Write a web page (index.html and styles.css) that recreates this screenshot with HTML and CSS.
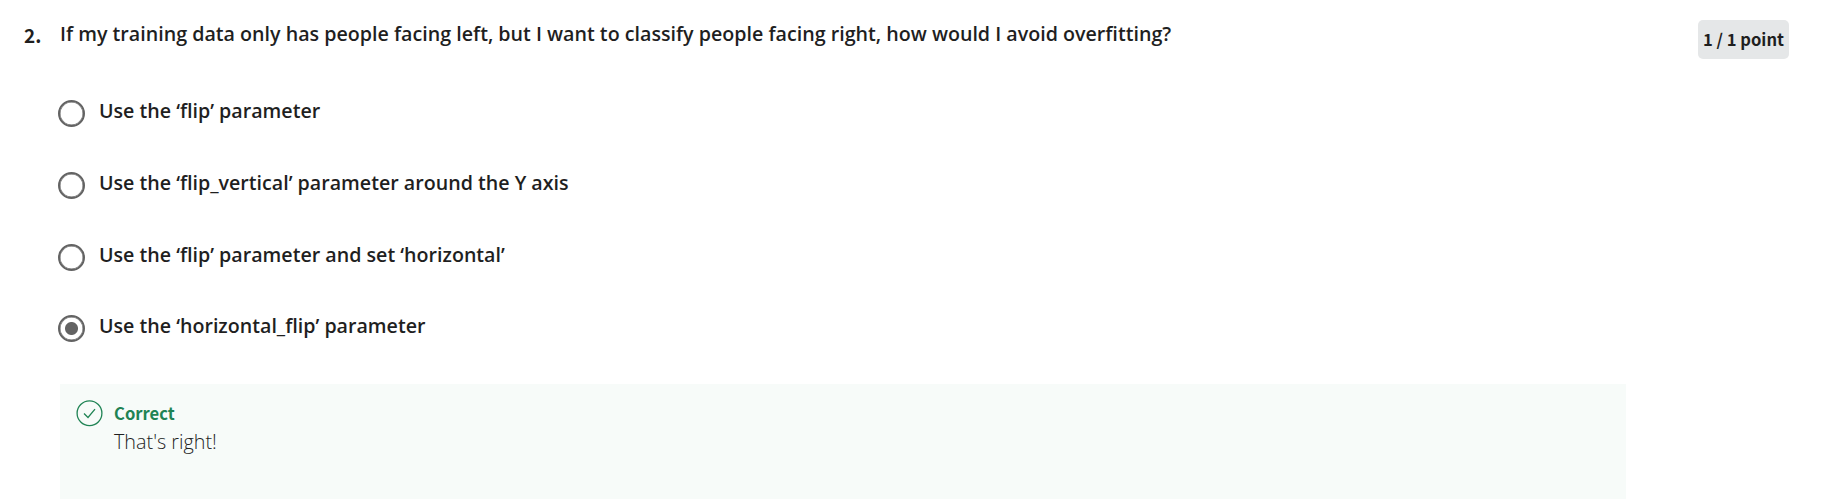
FILE: index.html
```
<!DOCTYPE html>
<html lang="en">
<head>
<meta charset="utf-8">
<title>Quiz question</title>
<link rel="stylesheet" href="styles.css">
</head>
<body>
<main class="question">
  <div class="number">2.</div>
  <section class="content">
    <h2 class="prompt">If my training data only has people facing left, but I want to classify people facing right, how would I avoid overfitting?</h2>
    <div class="options">
      <div class="option"><span class="radio"></span><span class="label">Use the ‘flip’ parameter</span></div>
      <div class="option"><span class="radio"></span><span class="label">Use the ‘flip_vertical’ parameter around the Y axis</span></div>
      <div class="option"><span class="radio"></span><span class="label">Use the ‘flip’ parameter and set ‘horizontal’</span></div>
      <div class="option"><span class="radio checked"></span><span class="label">Use the ‘horizontal_flip’ parameter</span></div>
    </div>
    <div class="feedback">
      <svg class="check" viewBox="0 0 28 28" width="28" height="28" fill="none" stroke="#1f8354" stroke-width="1.3"><circle cx="13.5" cy="14.3" r="12.4"/><path d="M8 14.5l4 4 7-8.4"/></svg>
      <div><div class="verdict">Correct</div><div class="note">That's right!</div></div>
    </div>
  </section>
  <div class="points">1 / 1 point</div>
</main>
</body>
</html>
```
FILE: styles.css
```
body {
  margin: 0;
  background: #fff;
  color: #1f1f1f;
  font-family: "Open Sans", sans-serif;
}
.question {
  display: flex;
  align-items: flex-start;
  height: 499px;
  overflow: hidden;
  padding-left: 24px;
}
.number {
  width: 36px;
  padding-top: 21px;
  font: 700 19px/28px "Noto Sans CJK SC", sans-serif;
}
.content { width: 1566px; }
.prompt {
  margin: 20px 0 0;
  font-size: 19.67px;
  font-weight: 600;
  line-height: 28px;
  white-space: nowrap;
}
.options { padding-top: 36px; }
.option {
  display: flex;
  height: 71.75px;
}
.radio {
  box-sizing: border-box;
  width: 27px;
  height: 27px;
  margin: 16px 13.5px 0 -1.6px;
  border: 2px solid #636363;
  box-shadow: inset 0 0 0 0.5px #636363;
  border-radius: 50%;
}
.checked {
  background: radial-gradient(circle, #636363 6px, transparent 7px);
}
.label {
  padding-top: 13px;
  font-size: 19.65px;
  font-weight: 600;
  line-height: 28px;
}
.feedback {
  display: flex;
  box-sizing: border-box;
  height: 115px;
  margin-top: 13px;
  padding: 15px;
  background: #f7fbf9;
}
.check { margin: 0 10px 0 1px; }
.verdict {
  color: #1f8354;
  font: 700 16.6px/29px "Noto Sans CJK SC", sans-serif;
}
.note {
  font-size: 19.8px;
  font-weight: 300;
  line-height: 28px;
}
.points {
  box-sizing: border-box;
  width: 91px;
  height: 39px;
  margin: 20px 0 0 72px;
  border-radius: 5px;
  background: #e5e7e8;
  font: 700 16.6px/39px "Noto Sans CJK SC", sans-serif;
  text-align: center;
  white-space: nowrap;
}
```
